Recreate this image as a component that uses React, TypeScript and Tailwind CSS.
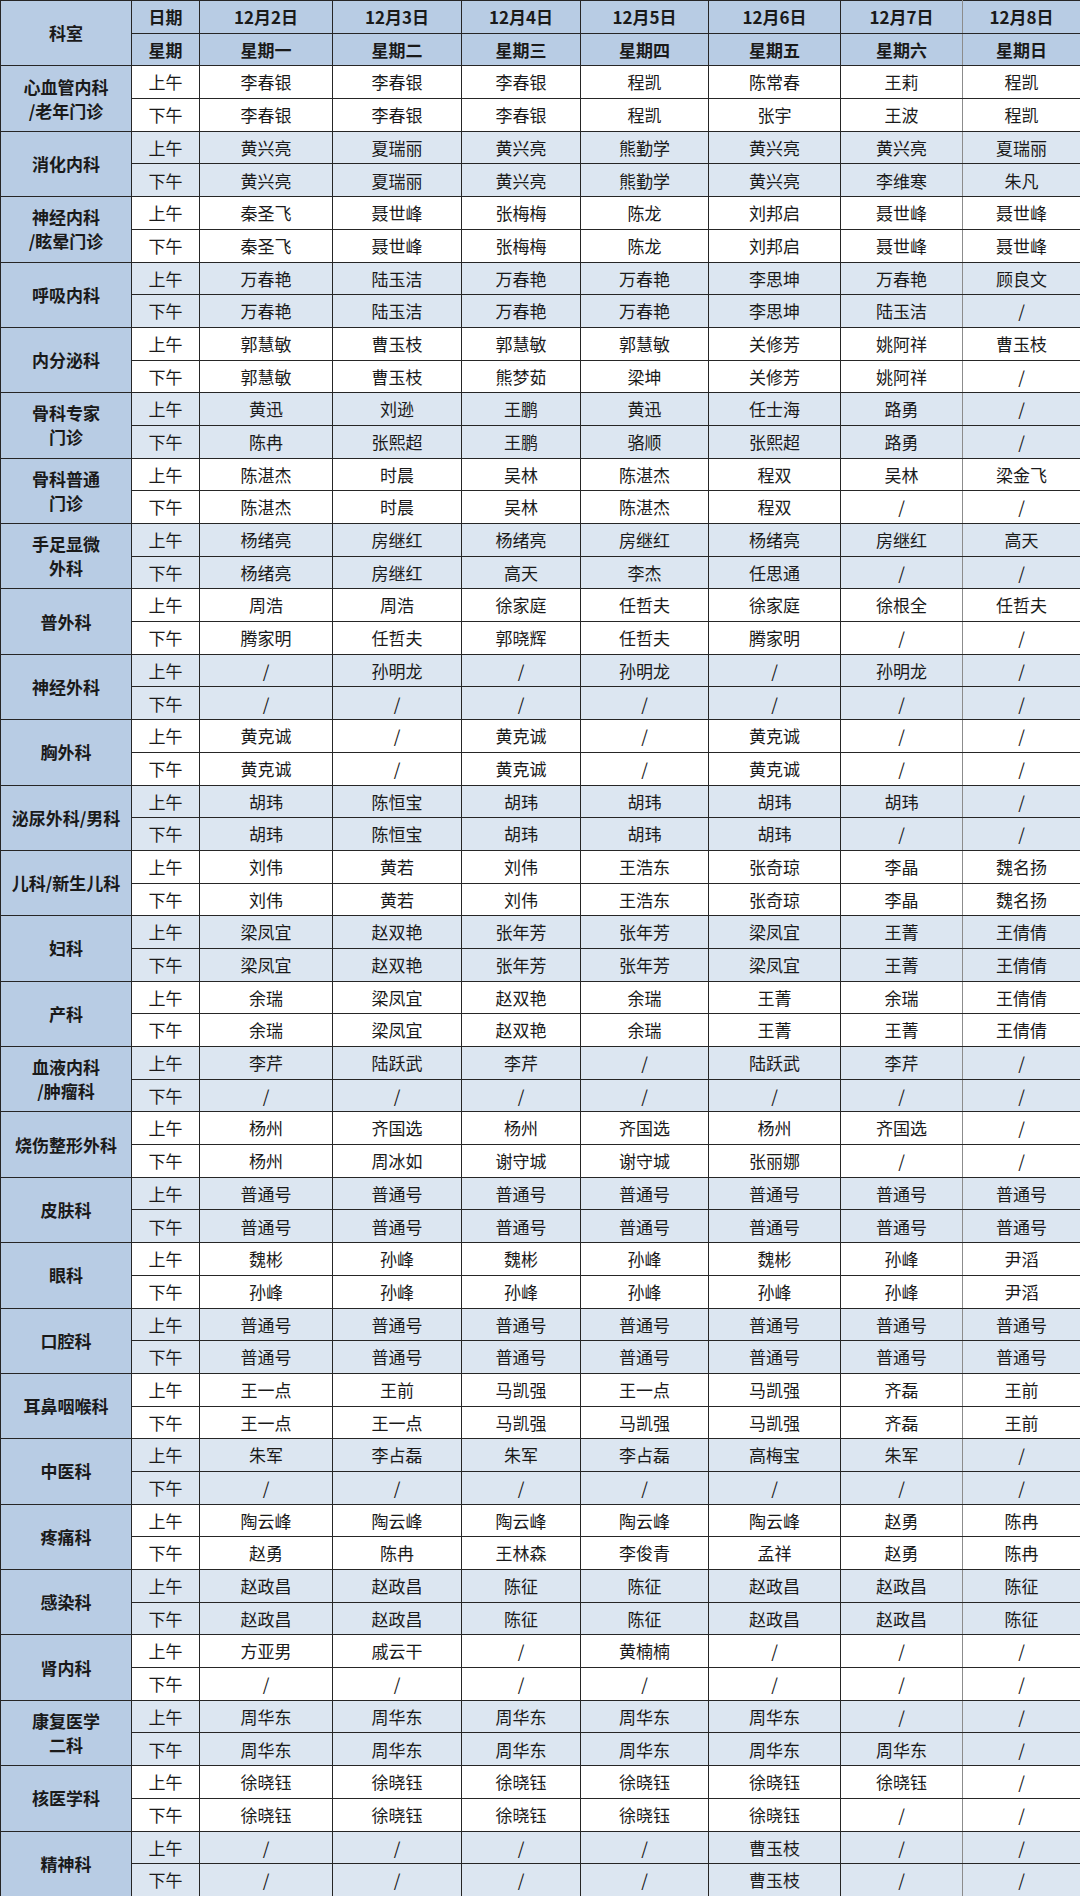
const days = [
  ["12月2日", "星期一"],
  ["12月3日", "星期二"],
  ["12月4日", "星期三"],
  ["12月5日", "星期四"],
  ["12月6日", "星期五"],
  ["12月7日", "星期六"],
  ["12月8日", "星期日"],
];

// name lines, then am / pm doctors (space separated, "/" = no clinic)
const depts: [string[], string, string][] = [
  [["心血管内科", "/老年门诊"], "李春银 李春银 李春银 程凯 陈常春 王莉 程凯", "李春银 李春银 李春银 程凯 张宇 王波 程凯"],
  [["消化内科"], "黄兴亮 夏瑞丽 黄兴亮 熊勤学 黄兴亮 黄兴亮 夏瑞丽", "黄兴亮 夏瑞丽 黄兴亮 熊勤学 黄兴亮 李维寒 朱凡"],
  [["神经内科", "/眩晕门诊"], "秦圣飞 聂世峰 张梅梅 陈龙 刘邦启 聂世峰 聂世峰", "秦圣飞 聂世峰 张梅梅 陈龙 刘邦启 聂世峰 聂世峰"],
  [["呼吸内科"], "万春艳 陆玉洁 万春艳 万春艳 李思坤 万春艳 顾良文", "万春艳 陆玉洁 万春艳 万春艳 李思坤 陆玉洁 /"],
  [["内分泌科"], "郭慧敏 曹玉枝 郭慧敏 郭慧敏 关修芳 姚阿祥 曹玉枝", "郭慧敏 曹玉枝 熊梦茹 梁坤 关修芳 姚阿祥 /"],
  [["骨科专家", "门诊"], "黄迅 刘逊 王鹏 黄迅 任士海 路勇 /", "陈冉 张熙超 王鹏 骆顺 张熙超 路勇 /"],
  [["骨科普通", "门诊"], "陈湛杰 时晨 吴林 陈湛杰 程双 吴林 梁金飞", "陈湛杰 时晨 吴林 陈湛杰 程双 / /"],
  [["手足显微", "外科"], "杨绪亮 房继红 杨绪亮 房继红 杨绪亮 房继红 高天", "杨绪亮 房继红 高天 李杰 任思通 / /"],
  [["普外科"], "周浩 周浩 徐家庭 任哲夫 徐家庭 徐根全 任哲夫", "腾家明 任哲夫 郭晓辉 任哲夫 腾家明 / /"],
  [["神经外科"], "/ 孙明龙 / 孙明龙 / 孙明龙 /", "/ / / / / / /"],
  [["胸外科"], "黄克诚 / 黄克诚 / 黄克诚 / /", "黄克诚 / 黄克诚 / 黄克诚 / /"],
  [["泌尿外科/男科"], "胡玮 陈恒宝 胡玮 胡玮 胡玮 胡玮 /", "胡玮 陈恒宝 胡玮 胡玮 胡玮 / /"],
  [["儿科/新生儿科"], "刘伟 黄若 刘伟 王浩东 张奇琼 李晶 魏名扬", "刘伟 黄若 刘伟 王浩东 张奇琼 李晶 魏名扬"],
  [["妇科"], "梁凤宜 赵双艳 张年芳 张年芳 梁凤宜 王菁 王倩倩", "梁凤宜 赵双艳 张年芳 张年芳 梁凤宜 王菁 王倩倩"],
  [["产科"], "余瑞 梁凤宜 赵双艳 余瑞 王菁 余瑞 王倩倩", "余瑞 梁凤宜 赵双艳 余瑞 王菁 王菁 王倩倩"],
  [["血液内科", "/肿瘤科"], "李芹 陆跃武 李芹 / 陆跃武 李芹 /", "/ / / / / / /"],
  [["烧伤整形外科"], "杨州 齐国选 杨州 齐国选 杨州 齐国选 /", "杨州 周冰如 谢守城 谢守城 张丽娜 / /"],
  [["皮肤科"], "普通号 普通号 普通号 普通号 普通号 普通号 普通号", "普通号 普通号 普通号 普通号 普通号 普通号 普通号"],
  [["眼科"], "魏彬 孙峰 魏彬 孙峰 魏彬 孙峰 尹滔", "孙峰 孙峰 孙峰 孙峰 孙峰 孙峰 尹滔"],
  [["口腔科"], "普通号 普通号 普通号 普通号 普通号 普通号 普通号", "普通号 普通号 普通号 普通号 普通号 普通号 普通号"],
  [["耳鼻咽喉科"], "王一点 王前 马凯强 王一点 马凯强 齐磊 王前", "王一点 王一点 马凯强 马凯强 马凯强 齐磊 王前"],
  [["中医科"], "朱军 李占磊 朱军 李占磊 高梅宝 朱军 /", "/ / / / / / /"],
  [["疼痛科"], "陶云峰 陶云峰 陶云峰 陶云峰 陶云峰 赵勇 陈冉", "赵勇 陈冉 王林森 李俊青 孟祥 赵勇 陈冉"],
  [["感染科"], "赵政昌 赵政昌 陈征 陈征 赵政昌 赵政昌 陈征", "赵政昌 赵政昌 陈征 陈征 赵政昌 赵政昌 陈征"],
  [["肾内科"], "方亚男 戚云干 / 黄楠楠 / / /", "/ / / / / / /"],
  [["康复医学", "二科"], "周华东 周华东 周华东 周华东 周华东 / /", "周华东 周华东 周华东 周华东 周华东 周华东 /"],
  [["核医学科"], "徐晓钰 徐晓钰 徐晓钰 徐晓钰 徐晓钰 徐晓钰 /", "徐晓钰 徐晓钰 徐晓钰 徐晓钰 徐晓钰 / /"],
  [["精神科"], "/ / / / 曹玉枝 / /", "/ / / / 曹玉枝 / /"],
];

const cell = "border border-[#262626] text-center align-middle p-0";
const sat = "border-r-[#8c8c8c]";

function DayCells({ names }: { names: string }) {
  return (
    <>
      {names.split(" ").map((n, i) => (
        <td key={i} className={`${cell} ${i === 5 ? sat : ""}`}>
          {n}
        </td>
      ))}
    </>
  );
}

export default function App() {
  return (
    <div className="w-[1080px] h-[1896px] bg-white font-['Noto_Sans_CJK_SC',sans-serif] text-[17px] text-[#1a1a1a]">
      <table className="w-[1080px] table-fixed border-collapse">
        <colgroup>
          <col className="w-[131px]" />
          <col className="w-[68px]" />
          <col className="w-[133px]" />
          <col className="w-[129px]" />
          <col className="w-[119px]" />
          <col className="w-[128px]" />
          <col className="w-[132px]" />
          <col className="w-[122px]" />
          <col className="w-[118px]" />
        </colgroup>
        <thead className="bg-[#b8cce4] font-bold">
          <tr className="h-[32.69px]">
            <th rowSpan={2} className={cell}>科室</th>
            <th className={cell}>日期</th>
            {days.map(([d], i) => (
              <th key={d} className={`${cell} ${i === 5 ? sat : ""}`}>{d}</th>
            ))}
          </tr>
          <tr className="h-[32.69px]">
            <th className={cell}>星期</th>
            {days.map(([, w], i) => (
              <th key={w} className={`${cell} ${i === 5 ? sat : ""}`}>{w}</th>
            ))}
          </tr>
        </thead>
        <tbody>
          {depts.map(([name, am, pm], idx) => {
            const band = idx % 2 === 0 ? "bg-white" : "bg-[#dce6f1]";
            return [
              <tr key={idx + "a"} className={`h-[32.69px] ${band}`}>
                <td rowSpan={2} className={`${cell} bg-[#b8cce4] font-bold leading-[24px]`}>
                  {name.map((l) => (
                    <div key={l}>{l}</div>
                  ))}
                </td>
                <td className={cell}>上午</td>
                <DayCells names={am} />
              </tr>,
              <tr key={idx + "p"} className={`h-[32.69px] ${band}`}>
                <td className={cell}>下午</td>
                <DayCells names={pm} />
              </tr>,
            ];
          })}
        </tbody>
      </table>
    </div>
  );
}
